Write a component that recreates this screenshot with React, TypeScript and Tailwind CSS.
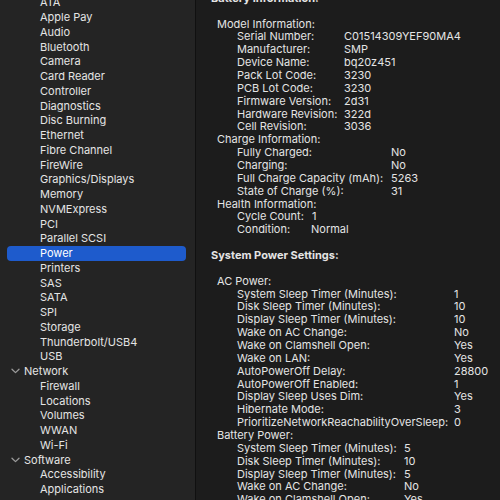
type Row =
  | { kind: "head"; text: string }
  | { kind: "blank" }
  | { kind: "group"; text: string }
  | { kind: "item"; label: string; value: string; w: number };

const sidebar: { text: string; level: number; selected?: boolean }[] = [
  { text: "ATA", level: 1 },
  { text: "Apple Pay", level: 1 },
  { text: "Audio", level: 1 },
  { text: "Bluetooth", level: 1 },
  { text: "Camera", level: 1 },
  { text: "Card Reader", level: 1 },
  { text: "Controller", level: 1 },
  { text: "Diagnostics", level: 1 },
  { text: "Disc Burning", level: 1 },
  { text: "Ethernet", level: 1 },
  { text: "Fibre Channel", level: 1 },
  { text: "FireWire", level: 1 },
  { text: "Graphics/Displays", level: 1 },
  { text: "Memory", level: 1 },
  { text: "NVMExpress", level: 1 },
  { text: "PCI", level: 1 },
  { text: "Parallel SCSI", level: 1 },
  { text: "Power", level: 1, selected: true },
  { text: "Printers", level: 1 },
  { text: "SAS", level: 1 },
  { text: "SATA", level: 1 },
  { text: "SPI", level: 1 },
  { text: "Storage", level: 1 },
  { text: "Thunderbolt/USB4", level: 1 },
  { text: "USB", level: 1 },
  { text: "Network", level: 0 },
  { text: "Firewall", level: 1 },
  { text: "Locations", level: 1 },
  { text: "Volumes", level: 1 },
  { text: "WWAN", level: 1 },
  { text: "Wi-Fi", level: 1 },
  { text: "Software", level: 0 },
  { text: "Accessibility", level: 1 },
  { text: "Applications", level: 1 },
];

const item = (label: string, value: string, w: number): Row => ({ kind: "item", label, value, w });

const rows: Row[] = [
  { kind: "head", text: "Battery Information:" },
  { kind: "blank" },
  { kind: "group", text: "Model Information:" },
  item("Serial Number:", "C01514309YEF90MA4", 107),
  item("Manufacturer:", "SMP", 107),
  item("Device Name:", "bq20z451", 107),
  item("Pack Lot Code:", "3230", 107),
  item("PCB Lot Code:", "3230", 107),
  item("Firmware Version:", "2d31", 107),
  item("Hardware Revision:", "322d", 107),
  item("Cell Revision:", "3036", 107),
  { kind: "group", text: "Charge Information:" },
  item("Fully Charged:", "No", 154),
  item("Charging:", "No", 154),
  item("Full Charge Capacity (mAh):", "5263", 154),
  item("State of Charge (%):", "31", 154),
  { kind: "group", text: "Health Information:" },
  item("Cycle Count:", "1", 75),
  item("Condition:", "Normal", 74),
  { kind: "blank" },
  { kind: "head", text: "System Power Settings:" },
  { kind: "blank" },
  { kind: "group", text: "AC Power:" },
  item("System Sleep Timer (Minutes):", "1", 217),
  item("Disk Sleep Timer (Minutes):", "10", 217),
  item("Display Sleep Timer (Minutes):", "10", 217),
  item("Wake on AC Change:", "No", 217),
  item("Wake on Clamshell Open:", "Yes", 217),
  item("Wake on LAN:", "Yes", 217),
  item("AutoPowerOff Delay:", "28800", 217),
  item("AutoPowerOff Enabled:", "1", 217),
  item("Display Sleep Uses Dim:", "Yes", 217),
  item("Hibernate Mode:", "3", 217),
  item("PrioritizeNetworkReachabilityOverSleep:", "0", 217),
  { kind: "group", text: "Battery Power:" },
  item("System Sleep Timer (Minutes):", "5", 167),
  item("Disk Sleep Timer (Minutes):", "10", 167),
  item("Display Sleep Timer (Minutes):", "5", 167),
  item("Wake on AC Change:", "No", 167),
  item("Wake on Clamshell Open:", "Yes", 167),
];

function Chevron() {
  return (
    <svg width="9" height="6" viewBox="0 0 9 6" className="mr-[4px] ml-[4px]">
      <path d="M1 1.2 L4.5 4.6 L8 1.2" fill="none" stroke="#9a9a9a" strokeWidth="1.3" strokeLinecap="round" strokeLinejoin="round" />
    </svg>
  );
}

export default function App() {
  return (
    <div className="flex h-[500px] w-[500px] overflow-hidden bg-[#1c1c1c] font-['Inter',sans-serif] text-[11px] text-[#e4e4e4]">
      {/* Sidebar */}
      <div className="w-[196px] shrink-0 overflow-hidden border-r border-[#101010] bg-[#242424]">
        <div className="-mt-[4.7px]">
          {sidebar.map((s) => (
            <div
              key={s.text}
              className={
                "ml-[7px] mr-[9px] flex h-[14.76px] items-center rounded-[4px] " +
                (s.selected ? "bg-[#1e5bcc] text-white" : "")
              }
            >
              {s.level === 0 ? (
                <>
                  <Chevron />
                  <span>{s.text}</span>
                </>
              ) : (
                <span className="pl-[33px]">{s.text}</span>
              )}
            </div>
          ))}
        </div>
      </div>

      {/* Detail pane */}
      <div className="flex-1 overflow-hidden">
        <div className="-mt-[8.4px]">
          {rows.map((r, i) => {
            if (r.kind === "blank") return <div key={i} className="h-[12.86px]" />;
            if (r.kind === "head")
              return (
                <div key={i} className="flex h-[12.86px] items-center pl-[15px] font-bold">
                  {r.text}
                </div>
              );
            if (r.kind === "group")
              return (
                <div key={i} className="flex h-[12.86px] items-center pl-[21px]">
                  {r.text}
                </div>
              );
            return (
              <div key={i} className="flex h-[12.86px] items-center whitespace-nowrap pl-[41px]">
                <span className="shrink-0" style={{ width: r.w }}>
                  {r.label}
                </span>
                <span>{r.value}</span>
              </div>
            );
          })}
        </div>
      </div>
    </div>
  );
}
